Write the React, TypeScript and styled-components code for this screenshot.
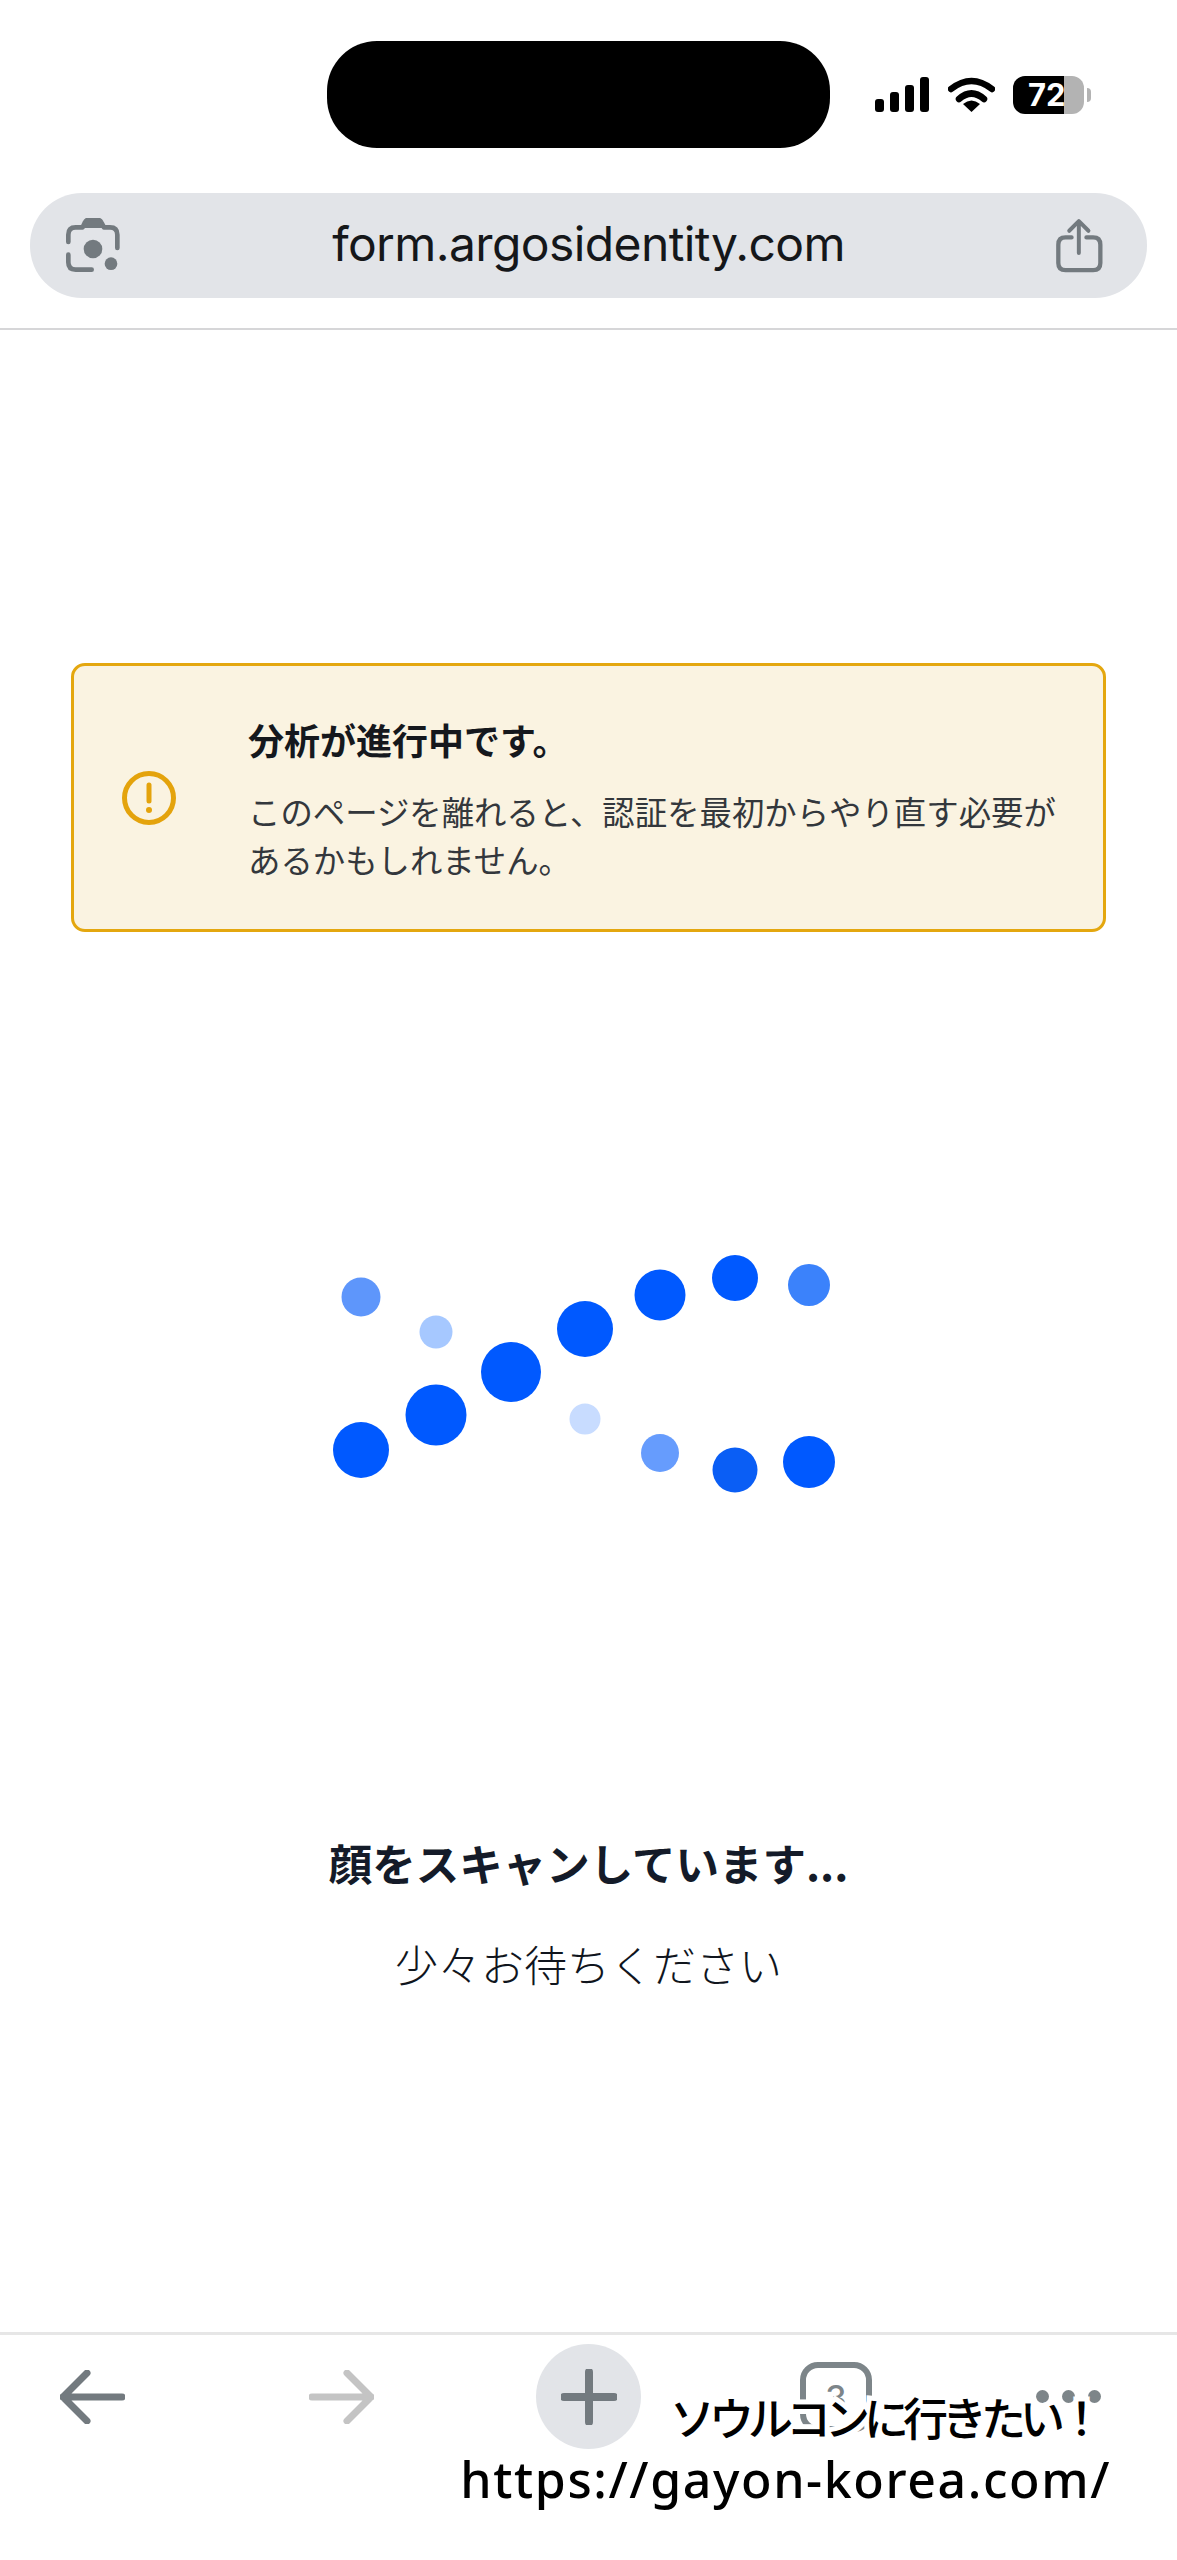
import React from "react";
import styled, { createGlobalStyle } from "styled-components";

const GlobalStyle = createGlobalStyle`
  html, body {
    margin: 0;
    padding: 0;
    background: #fff;
  }
  * {
    box-sizing: border-box;
  }
`;

const JP = `"Noto Sans CJK JP", "Noto Sans", sans-serif`;

const Page = styled.div`
  position: relative;
  width: 1177px;
  height: 2560px;
  display: flex;
  flex-direction: column;
  background: #fff;
  overflow: hidden;
  font-family: ${JP};
`;

const Header = styled.header`
  padding: 41px 30px 30px;
  border-bottom: 2px solid #d6d6d8;
`;

const StatusRow = styled.div`
  display: flex;
  align-items: center;
  height: 107px;
  padding-left: 297px;
  margin-bottom: 45px;
`;

const Island = styled.div`
  width: 503px;
  height: 107px;
  border-radius: 50px;
  background: #000;
  margin-right: 45px;
`;

const StatusIcons = styled.div`
  display: flex;
  align-items: center;
  gap: 18px;
`;

const Battery = styled.div`
  position: relative;
  width: 71px;
  height: 38px;
  border-radius: 12px;
  background: linear-gradient(90deg, #000 0 72%, #b3b3b3 72% 100%);
  color: #fff;
  font: 700 31px/38px "Inter", sans-serif;
  padding-left: 15px;
  &::after {
    content: "";
    position: absolute;
    right: -7px;
    top: 12px;
    width: 4px;
    height: 14px;
    border-radius: 0 6px 6px 0;
    background: #b3b3b3;
  }
`;

const UrlBar = styled.div`
  display: flex;
  align-items: center;
  justify-content: space-between;
  height: 105px;
  padding: 0 44px 0 36px;
  border-radius: 52px;
  background: #e2e4e8;
`;

const UrlText = styled.span`
  font: 400 48px/1 "Inter", sans-serif;
  color: #15171a;
  letter-spacing: -0.6px;
  margin-top: -3px;
`;

const Main = styled.main`
  flex: 1;
  display: flex;
  flex-direction: column;
  align-items: center;
  padding-top: 333px;
`;

const WarningCard = styled.section`
  width: 1035px;
  height: 269px;
  display: flex;
  align-items: center;
  padding: 0 40px 0 48px;
  gap: 72px;
  background: #faf3e1;
  border: 3px solid #e4a70f;
  border-radius: 14px;
`;

const WarningText = styled.div`
  display: flex;
  flex-direction: column;
  gap: 24px;
  margin-top: 3px;
`;

const WarningTitle = styled.h2`
  margin: 0;
  font: 700 36px/48px ${JP};
  color: #15181d;
`;

const WarningBody = styled.p`
  margin: 0;
  font: 400 32.4px/48px ${JP};
  color: #33373c;
  white-space: nowrap;
`;

const ScanDots = styled.svg`
  display: block;
  margin: 318px 7px 0 0;
`;

const ScanTitle = styled.h1`
  margin: 333px 0 0;
  font: 700 43.5px/60px ${JP};
  color: #141b29;
`;

const ScanSub = styled.p`
  margin: 40px 0 0;
  font: 300 43px/60px ${JP};
  color: #10151d;
`;

const Toolbar = styled.nav`
  height: 228px;
  border-top: 3px solid #e6e6e6;
  display: flex;
  align-items: flex-start;
  padding: 9px 0 0 60px;
`;

const ToolSlot = styled.div<{ $width: number }>`
  width: ${(p) => p.$width}px;
  height: 105px;
  display: flex;
  align-items: center;
`;

const PlusCircle = styled.div`
  width: 105px;
  height: 105px;
  border-radius: 50%;
  background: #e2e4e8;
  display: flex;
  align-items: center;
  justify-content: center;
`;

const TabsButton = styled.div`
  width: 72px;
  height: 70px;
  border: 6px solid #7d8589;
  border-radius: 18px;
  color: #7d8589;
  font: 500 34px/60px "Inter", sans-serif;
  text-align: center;
`;

const MoreDots = styled.div`
  display: flex;
  gap: 13px;
  span {
    width: 13px;
    height: 13px;
    border-radius: 50%;
    background: #7d8589;
  }
`;

const Watermark = styled.div`
  position: absolute;
  right: 66px;
  top: 2388px;
  display: flex;
  flex-direction: column;
  align-items: flex-end;
  color: #000;
  -webkit-text-stroke: 10px #fff;
  paint-order: stroke fill;
`;

const WatermarkJa = styled.span`
  font: 500 45px/58px ${JP};
  letter-spacing: -6px;
  margin-right: 13px;
`;

const WatermarkUrl = styled.span`
  font: 500 50px/66px "Noto Sans", sans-serif;
  letter-spacing: 1.6px;
`;

const dots = [
  { x: 361, y: 1450, d: 56, c: "#0059ff" },
  { x: 436, y: 1415, d: 61, c: "#0059ff" },
  { x: 511, y: 1372, d: 60, c: "#0059ff" },
  { x: 585, y: 1329, d: 56, c: "#0059ff" },
  { x: 660, y: 1295, d: 51, c: "#0059ff" },
  { x: 735, y: 1278, d: 46, c: "#0059ff" },
  { x: 809, y: 1285, d: 42, c: "#3b82fb" },
  { x: 361, y: 1297, d: 39, c: "#5e96fb" },
  { x: 436, y: 1332, d: 33, c: "#a6c8ff" },
  { x: 585, y: 1419, d: 31, c: "#c8dcff" },
  { x: 660, y: 1453, d: 38, c: "#669cfd" },
  { x: 735, y: 1470, d: 45, c: "#0a5ef5" },
  { x: 809, y: 1462, d: 52, c: "#0059ff" },
];

function SignalIcon() {
  return (
    <svg width="55" height="35" viewBox="0 0 55 35">
      <rect x="0" y="22" width="9" height="13" rx="3" fill="#000" />
      <rect x="15" y="15" width="9" height="20" rx="3" fill="#000" />
      <rect x="30" y="8" width="9" height="27" rx="3" fill="#000" />
      <rect x="45" y="0" width="9" height="35" rx="3" fill="#000" />
    </svg>
  );
}

function WifiIcon() {
  return (
    <svg width="47" height="35" viewBox="0 0 47 35">
      <path d="M3 12 Q23.5 -4 44 12" fill="none" stroke="#000" strokeWidth="6.5" strokeLinecap="round" />
      <path d="M11 22 Q23.5 11 36 22" fill="none" stroke="#000" strokeWidth="6.5" strokeLinecap="round" />
      <path d="M15 27 Q23.5 20 32 27 L23.5 35 Z" fill="#000" />
    </svg>
  );
}

function LensIcon() {
  return (
    <svg width="55" height="55" viewBox="78 55 165 165">
      <path d="M85 127 V105 Q85 83 107 83 H128 L135 68 Q138 60 148 60 H170 Q180 60 184 68 L192 83 H210 Q232 83 232 105 V145" fill="none" stroke="#737a7f" strokeWidth="14" strokeLinecap="round" strokeLinejoin="round" />
      <path d="M128 85 L138 62 H180 L192 85 Z" fill="#737a7f" />
      <path d="M85 165 V188 Q85 210 107 210 H155" fill="none" stroke="#737a7f" strokeWidth="14" strokeLinecap="round" />
      <circle cx="159" cy="148" r="28" fill="#737a7f" />
      <circle cx="213" cy="192" r="19" fill="#737a7f" />
    </svg>
  );
}

function ShareIcon() {
  return (
    <svg width="47" height="55" viewBox="78 55 142 165">
      <path d="M147 160 V65 M118 93 L147 64 L176 93" fill="none" stroke="#737a7f" strokeWidth="12" strokeLinecap="round" strokeLinejoin="round" />
      <path d="M125 113 H107 Q85 113 85 135 V190 Q85 212 107 212 H190 Q212 212 212 190 V135 Q212 113 190 113 H170" fill="none" stroke="#737a7f" strokeWidth="13" strokeLinecap="round" />
    </svg>
  );
}

function AlertIcon() {
  return (
    <svg width="54" height="54" viewBox="0 0 54 54" style={{ flexShrink: 0 }}>
      <circle cx="27" cy="27" r="24.5" fill="none" stroke="#e4a30c" strokeWidth="5" />
      <path d="M27 14 V30" stroke="#e4a30c" strokeWidth="5" strokeLinecap="round" />
      <circle cx="27" cy="39" r="3" fill="#e4a30c" />
    </svg>
  );
}

function ArrowIcon({ color, flip }: { color: string; flip?: boolean }) {
  return (
    <svg width="65" height="54" viewBox="0 0 65 54" style={flip ? { transform: "scaleX(-1)" } : undefined}>
      <path d="M3 27 H62 M27 3 L3 27 L27 51" fill="none" stroke={color} strokeWidth="7" strokeLinecap="round" strokeLinejoin="round" />
    </svg>
  );
}

function PlusIcon() {
  return (
    <svg width="56" height="56" viewBox="0 0 56 56">
      <path d="M28 3 V53 M3 28 H53" stroke="#737a7f" strokeWidth="8" strokeLinecap="round" />
    </svg>
  );
}

export default function App() {
  return (
    <Page>
      <GlobalStyle />
      <Header>
        <StatusRow>
          <Island />
          <StatusIcons>
            <SignalIcon />
            <WifiIcon />
            <Battery>72</Battery>
          </StatusIcons>
        </StatusRow>
        <UrlBar>
          <LensIcon />
          <UrlText>form.argosidentity.com</UrlText>
          <ShareIcon />
        </UrlBar>
      </Header>
      <Main>
        <WarningCard>
          <AlertIcon />
          <WarningText>
            <WarningTitle>分析が進行中です。</WarningTitle>
            <WarningBody>
              このページを離れると、認証を最初からやり直す必要が
              <br />
              あるかもしれません。
            </WarningBody>
          </WarningText>
        </WarningCard>
        <ScanDots width="504" height="250" viewBox="333 1250 504 250">
          {dots.map((dot) => (
            <circle key={`${dot.x}-${dot.y}`} cx={dot.x} cy={dot.y} r={dot.d / 2} fill={dot.c} />
          ))}
        </ScanDots>
        <ScanTitle>顔をスキャンしています...</ScanTitle>
        <ScanSub>少々お待ちください</ScanSub>
      </Main>
      <Toolbar>
        <ToolSlot $width={249}>
          <ArrowIcon color="#737a7f" />
        </ToolSlot>
        <ToolSlot $width={227}>
          <ArrowIcon color="#c4c4c4" flip />
        </ToolSlot>
        <ToolSlot $width={264}>
          <PlusCircle>
            <PlusIcon />
          </PlusCircle>
        </ToolSlot>
        <ToolSlot $width={236}>
          <TabsButton>3</TabsButton>
        </ToolSlot>
        <ToolSlot $width={80}>
          <MoreDots>
            <span />
            <span />
            <span />
          </MoreDots>
        </ToolSlot>
      </Toolbar>
      <Watermark>
        <WatermarkJa>ソウルコンに行きたい！</WatermarkJa>
        <WatermarkUrl>https://gayon-korea.com/</WatermarkUrl>
      </Watermark>
    </Page>
  );
}
